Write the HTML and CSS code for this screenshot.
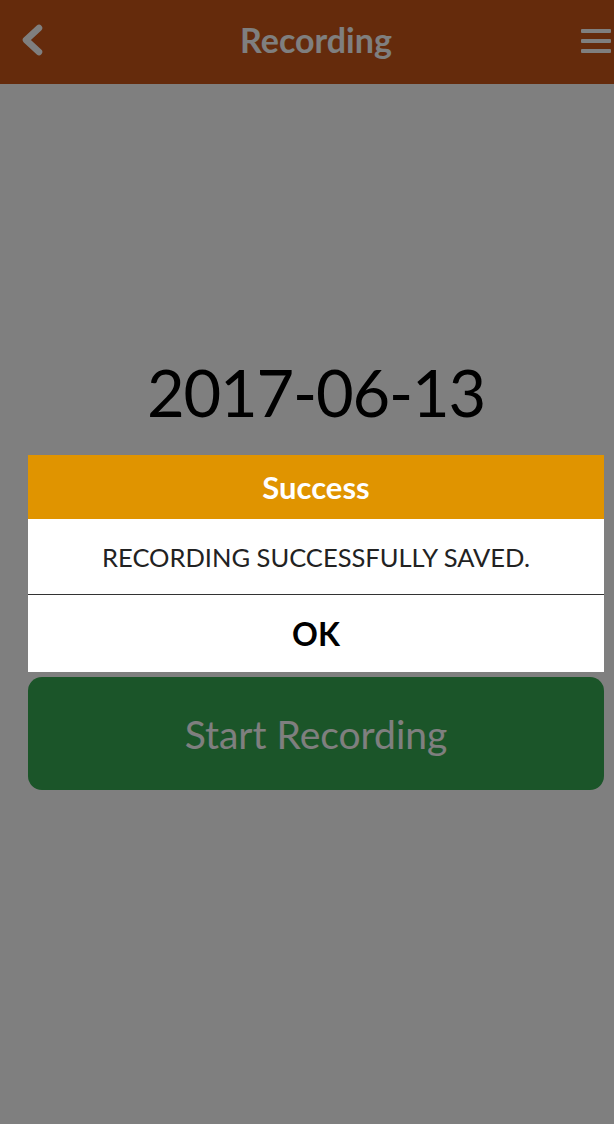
FILE: index.html
```html
<!DOCTYPE html>
<html>
<head>
<meta charset="utf-8">
<link rel="stylesheet" href="styles.css">
</head>
<body>
<header class="topbar">
  <button class="icon-btn back" aria-label="Back">
    <svg width="50" height="84" viewBox="0 0 50 84"><polyline points="39,28 26,40 39,52" fill="none" stroke="#fff" stroke-width="6.5" stroke-linecap="round" stroke-linejoin="round"/></svg>
  </button>
  <h1 class="title">Recording</h1>
  <button class="icon-btn menu" aria-label="Menu">
    <span class="bar"></span><span class="bar"></span><span class="bar"></span>
  </button>
</header>
<main class="content">
  <div class="date">2017-06-13</div>
  <button class="start-btn">Start Recording</button>
</main>
<div class="overlay"></div>
<div class="dialog">
  <div class="dialog-head">Success</div>
  <div class="dialog-body">RECORDING SUCCESSFULLY SAVED.</div>
  <div class="dialog-ok">OK</div>
</div>
</body>
</html>
```
FILE: styles.css
```css
html, body {
  margin: 0;
  padding: 0;
}
body {
  width: 614px;
  height: 1124px;
  background: #ffffff;
  font-family: "Lato", "Open Sans", sans-serif;
  position: relative;
  overflow: hidden;
}
.topbar {
  height: 84px;
  background: #cb5618;
  display: flex;
  align-items: center;
  justify-content: space-between;
  position: relative;
}
.icon-btn {
  background: none;
  border: 0;
  padding: 0;
  cursor: pointer;
}
.back {
  width: 50px;
  height: 84px;
  display: flex;
}
.title {
  margin: 0;
  font-size: 34px;
  font-weight: 700;
  color: #ffffff;
  position: absolute;
  left: 28px;
  right: 10px;
  text-align: center;
  top: 20px;
  line-height: 40px;
  pointer-events: none;
}
.menu {
  margin-right: 3px;
  width: 30px;
  display: flex;
  flex-direction: column;
  gap: 6px;
  margin-top: -3px;
}
.bar {
  display: block;
  width: 30px;
  height: 4px;
  background: #fff;
  border-radius: 1px;
}
.content {
  padding: 0 10px 0 28px;
  display: flex;
  flex-direction: column;
  align-items: stretch;
}
.date {
  margin-top: 268px;
  font-size: 65px;
  letter-spacing: -1.2px;
  line-height: 80px;
  text-align: center;
  color: #000;
}
.start-btn {
  margin-top: 245px;
  height: 113px;
  border: 0;
  border-radius: 14px;
  background: #36aa52;
  color: #ffffff;
  font-family: "Lato", "Open Sans", sans-serif;
  font-size: 39px;
}
.overlay {
  position: absolute;
  inset: 0;
  background: rgba(0,0,0,0.5);
}
.dialog {
  position: absolute;
  top: 455px;
  left: 28px;
  width: 576px;
  background: #fff;
}
.dialog-head {
  height: 64px;
  background: #e09400;
  color: #fff;
  font-weight: 700;
  font-size: 31px;
  display: flex;
  align-items: center;
  justify-content: center;
}
.dialog-body {
  height: 76px;
  border-bottom: 1px solid #333;
  box-sizing: border-box;
  display: flex;
  align-items: center;
  justify-content: center;
  font-size: 25.5px;
  color: #222;
}
.dialog-ok {
  height: 77px;
  display: flex;
  align-items: center;
  justify-content: center;
  font-size: 32px;
  font-weight: 700;
  color: #000;
}
```
